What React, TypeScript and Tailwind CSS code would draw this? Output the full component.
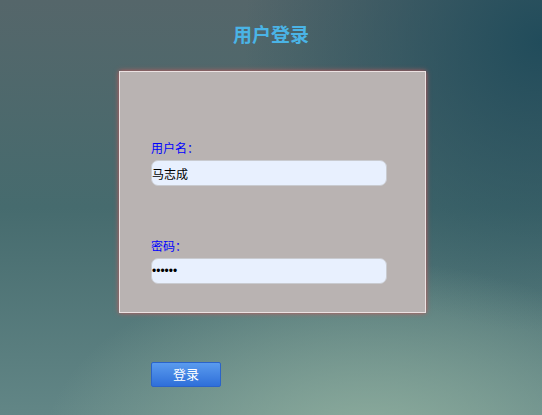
import { useState } from "react";

export default function App() {
  const [username, setUsername] = useState("马志成");
  const [password, setPassword] = useState("123456");

  return (
    <div className="h-[415px] w-full overflow-hidden font-['Liberation_Sans','Noto_Sans_CJK_SC',sans-serif] bg-[radial-gradient(ellipse_60%_45%_at_68%_108%,#8fae9e_0%,rgba(143,174,158,0)_100%),radial-gradient(ellipse_55%_70%_at_100%_10%,#214c5b_0%,rgba(33,76,91,0)_100%),linear-gradient(to_bottom,#55666a_0%,#466b6e_50%,#628686_100%)]">
      <h1 className="pt-[25px] text-center text-[19px] font-bold leading-[21px] text-[#4ab4e6]">
        用户登录
      </h1>

      <div className="ml-[119px] mt-[25px] w-[307px] border border-[#ece2e2] bg-[#b9b3b2] px-[31px] pb-[28px] pt-[69px] shadow-[0_0_5px_#c95a5a]">
        <label className="block text-[12px] leading-[16px] text-[#0000ff]">用户名：</label>
        <input
          type="text"
          value={username}
          onChange={(e) => setUsername(e.target.value)}
          className="mt-[3px] block h-[26px] w-[236px] rounded-[7px] border border-[#c9cbd0] bg-[#e8f0fe] p-0 text-[12px] text-black outline-none"
        />

        <label className="mt-[53px] block text-[12px] leading-[16px] text-[#0000ff]">密码：</label>
        <input
          type="password"
          value={password}
          onChange={(e) => setPassword(e.target.value)}
          className="mt-[3px] block h-[26px] w-[236px] rounded-[7px] border border-[#c9cbd0] bg-[#e8f0fe] p-0 text-[12px] text-black outline-none"
        />
      </div>

      <button
        type="button"
        className="ml-[151px] mt-[49px] block h-[25px] w-[70px] rounded-[2px] border border-[#2b63c9] bg-[linear-gradient(to_bottom,#5a9bee,#2f6fd9)] text-[13px] leading-[23px] text-white"
      >
        登录
      </button>
    </div>
  );
}
